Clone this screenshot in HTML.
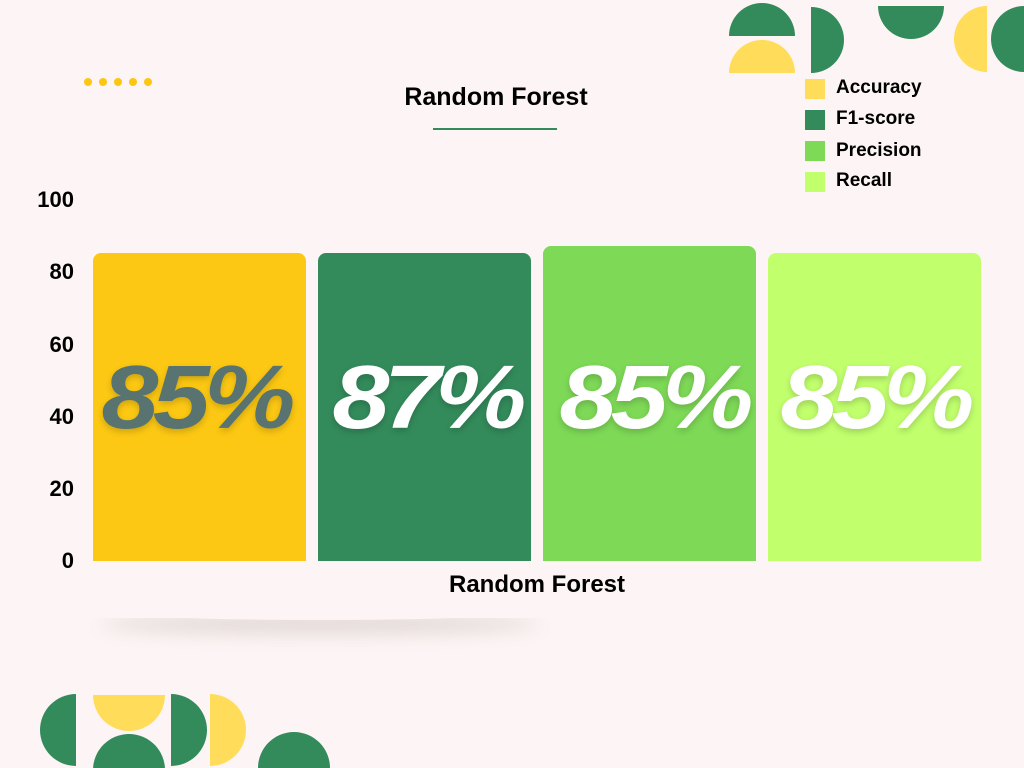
<!DOCTYPE html>
<html><head><meta charset="utf-8"><style>
body{margin:0;width:1024px;height:768px;background:#fdf5f5;position:relative;overflow:hidden;font-family:"Liberation Sans",sans-serif;font-weight:bold;color:#000}
.a{position:absolute}
.bar{position:absolute;border-radius:8px 8px 0 0;width:213px}
.num{position:absolute;font-style:italic;font-size:90px;letter-spacing:-5px;top:343px;width:213px;text-align:center;line-height:110px;text-shadow:0 3px 6px rgba(0,0,0,.18);transform:scaleX(1.14)}
.y{position:absolute;right:950px;font-size:22px;line-height:22px}
.lg{position:absolute;left:805px;width:20px;height:20px}
.lt{position:absolute;left:836px;font-size:19px;line-height:20px}
</style></head><body>
<svg class="a" style="left:0;top:0" width="1024" height="768">
<g fill="#338b5b"><path d="M729 36A33 33 0 0 1 795 36Z"/><path d="M811 7A33 33 0 0 1 811 73Z"/><path d="M878 6A33 33 0 0 0 944 6Z"/><path d="M1024 6A33 33 0 0 0 1024 72Z"/>
<path d="M76 694A36 36 0 0 0 76 766Z"/><path d="M93 770A36 36 0 0 1 165 770Z"/><path d="M171 694A36 36 0 0 1 171 766Z"/><path d="M258 768A36 36 0 0 1 330 768Z"/></g>
<g fill="#ffdc5a"><path d="M729 73A33 33 0 0 1 795 73Z"/><path d="M987 6A33 33 0 0 0 987 72Z"/><path d="M93 695A36 36 0 0 0 165 695Z"/><path d="M210 694A36 36 0 0 1 210 766Z"/></g>
<g fill="#fcc613"><circle cx="88" cy="82" r="4"/><circle cx="103" cy="82" r="4"/><circle cx="118" cy="82" r="4"/><circle cx="133" cy="82" r="4"/><circle cx="148" cy="82" r="4"/></g>
<rect x="433" y="128" width="124" height="2" fill="#338b5b"/>
</svg>
<div class="a" style="left:346px;width:300px;text-align:center;top:83px;font-size:25px">Random Forest</div>
<div class="lg" style="top:79px;background:#ffdc5a"></div><div class="lt" style="top:78px">Accuracy</div>
<div class="lg" style="top:110px;background:#338b5b"></div><div class="lt" style="top:109px">F1-score</div>
<div class="lg" style="top:141px;background:#7ed957"></div><div class="lt" style="top:141px">Precision</div>
<div class="lg" style="top:172px;background:#c1ff6d"></div><div class="lt" style="top:171px">Recall</div>
<div class="y" style="top:189px">100</div><div class="y" style="top:261px">80</div><div class="y" style="top:334px">60</div><div class="y" style="top:406px">40</div><div class="y" style="top:478px">20</div><div class="y" style="top:550px">0</div>
<div class="a" style="left:100px;top:600px;width:440px;height:20px;box-shadow:0 14px 18px rgba(120,100,100,.2);border-radius:50%"></div>
<div class="a" style="left:80px;top:570px;width:920px;height:48px;background:#fdf5f5"></div>
<div class="bar" style="left:93px;top:253px;height:308px;background:#fcc813"></div>
<div class="bar" style="left:318px;top:253px;height:308px;background:#338b5b"></div>
<div class="bar" style="left:543px;top:246px;height:315px;background:#7ed957"></div>
<div class="bar" style="left:768px;top:253px;height:308px;background:#c1ff6d"></div>
<div class="num" style="left:89px;color:#587370">85%</div>
<div class="num" style="left:320px;color:#fff">87%</div>
<div class="num" style="left:547px;color:#fff">85%</div>
<div class="num" style="left:768px;color:#fff">85%</div>
<div class="a" style="left:387px;width:300px;text-align:center;top:571px;font-size:24px">Random Forest</div>
</body></html>
